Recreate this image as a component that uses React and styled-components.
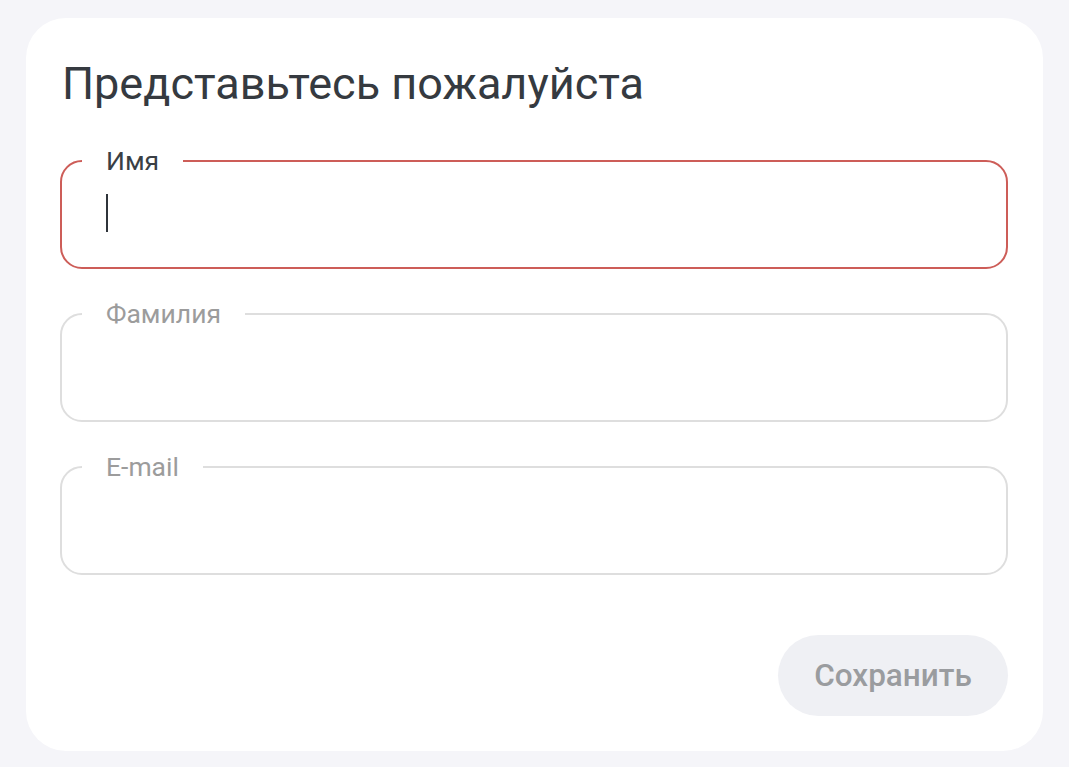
import React from "react";
import styled, { createGlobalStyle } from "styled-components";

const Global = createGlobalStyle`
  html, body { margin: 0; padding: 0; background: #f5f5f9; }
  body { font-family: Roboto, "Noto Sans", Arial, sans-serif; }
  * { box-sizing: border-box; }
`;

const Page = styled.div`
  padding: 18px 26px 16px 26px;
`;

const Card = styled.form`
  background: #ffffff;
  border-radius: 40px;
  height: 733px;
  padding: 40px 35px 35px 35px;
  display: flex;
  flex-direction: column;
`;

const Title = styled.h1`
  margin: 0 0 0 1px;
  font-family: Roboto, sans-serif;
  font-weight: 400;
  font-size: 45px;
  line-height: 52px;
  color: #353a40;
  letter-spacing: 0;
`;

const Fields = styled.div`
  display: flex;
  flex-direction: column;
  gap: 33px;
  margin-top: 39px;
`;

const Field = styled.fieldset`
  margin: 0 0 0 -1px;
  padding: 0;
  min-width: 0;
  border: 2px solid ${(p) => (p.$active ? "#cd5d58" : "#dedede")};
  border-radius: 22px;
  position: relative;
`;

const Legend = styled.legend`
  margin-left: 20px;
  padding: 0 24px;
  font-size: 26.5px;
  line-height: 24px;
  color: ${(p) => (p.$active ? "#3a3f45" : "#9c9c9c")};
`;

const Input = styled.input`
  display: block;
  width: 100%;
  height: 94px;
  border: none;
  outline: none;
  background: transparent;
  padding: 0 44px 12px 44px;
  font-family: Roboto, sans-serif;
  font-size: 28px;
  color: #353a40;
  caret-color: transparent;
`;

const Caret = styled.span`
  position: absolute;
  left: 44px;
  top: 21px;
  width: 2px;
  height: 38px;
  background: #2f343a;
`;

const Footer = styled.div`
  margin-top: auto;
  display: flex;
  justify-content: flex-end;
`;

const Button = styled.button`
  height: 81px;
  width: 230px;
  border: none;
  border-radius: 41px;
  background: #eff0f4;
  color: #9a9c9f;
  font-family: Roboto, sans-serif;
  font-weight: 500;
  font-size: 31.5px;
  cursor: default;
`;

const fields = [
  { label: "Имя", active: true },
  { label: "Фамилия" },
  { label: "E-mail" },
];

export default function App() {
  return (
    <Page>
      <Global />
      <Card onSubmit={(e) => e.preventDefault()}>
        <Title>Представьтесь пожалуйста</Title>
        <Fields>
          {fields.map((f) => (
            <Field key={f.label} $active={f.active}>
              <Legend $active={f.active}>{f.label}</Legend>
              <Input type="text" aria-label={f.label} />
              {f.active && <Caret />}
            </Field>
          ))}
        </Fields>
        <Footer>
          <Button type="button" disabled>Сохранить</Button>
        </Footer>
      </Card>
    </Page>
  );
}
